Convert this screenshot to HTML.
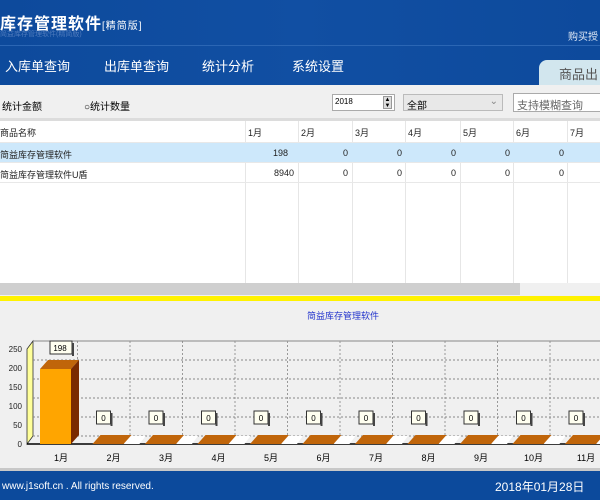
<!DOCTYPE html>
<html><head><meta charset="utf-8"><style>
*{margin:0;padding:0;box-sizing:border-box}
body{width:600px;height:500px;overflow:hidden;background:#f0f0f0;font-family:"Liberation Sans","Noto Sans CJK SC",sans-serif;position:relative}
.hd{position:absolute;left:0;top:0;width:600px;height:85px;background:linear-gradient(90deg,#0d4a9c,#114fa3 50%,#0d4a9c)}
.hd .t{position:absolute;left:0;top:10px;color:#fff;font-size:16px;font-weight:bold;letter-spacing:1px}
.hd .t small{font-size:10px;font-weight:normal}
.hd .s{position:absolute;left:0;top:29px;color:#4f7bbd;font-size:7px}
.hd .line{position:absolute;left:0;top:45px;width:600px;height:1px;background:#2b66b4}
.hd .buy{position:absolute;left:568px;top:28px;color:#dfe8f5;font-size:10px}
.nav{position:absolute;top:56px;color:#fff;font-size:13px}
.tab{position:absolute;left:539px;top:60px;width:70px;height:25px;background:#d2e6ee;border-radius:8px 8px 0 0;color:#555;font-size:13px;padding:4px 0 0 20px}
.tb{position:absolute;top:85px;left:0;width:600px;height:33px;background:#f0f0f0;font-size:10px}
.tbl{position:absolute;top:121px;left:0;width:600px;height:162px;background:#fff;font-size:9px;color:#222}
.row{position:absolute;left:0;width:600px;height:20px;border-bottom:1px solid #e8e8e8}
.c{position:absolute;top:5px}
.vl{position:absolute;top:0;width:1px;height:162px;background:#e6e6e6}
</style></head><body>
<div class="hd">
<div class="t">库存管理软件<small>[精简版]</small></div>
<div class="s">简益库存管理软件(精简版)</div>
<div class="line"></div>
<div class="buy">购买授</div>
</div>
<div class="nav" style="left:5px">入库单查询</div>
<div class="nav" style="left:104px">出库单查询</div>
<div class="nav" style="left:202px">统计分析</div>
<div class="nav" style="left:292px">系统设置</div>
<div class="tab">商品出</div>
<div class="tb">
<span style="position:absolute;left:2px;top:13px">统计金额</span>
<span style="position:absolute;left:84px;top:13px">○统计数量</span>
<div style="position:absolute;left:332px;top:9px;width:63px;height:17px;background:#fff;border:1px solid #aaa;font-size:8px;padding:2px">2018<span style="position:absolute;right:2px;top:1px;width:9px;height:13px;background:#ddd;border:1px solid #999;font-size:6px;line-height:6px;text-align:center">▲<br>▼</span></div>
<div style="position:absolute;left:403px;top:9px;width:100px;height:17px;background:#e8e8e8;border:1px solid #bbb;padding:2px 3px">全部<span style="position:absolute;right:4px;top:1px;color:#888">⌄</span></div>
<div style="position:absolute;left:513px;top:8px;width:90px;height:19px;background:#fff;border:1px solid #aaa;padding:3px;color:#666;font-size:11px">支持模糊查询</div>
</div>
<div style="position:absolute;top:118px;left:0;width:600px;height:3px;background:#dcdcdc"></div>
<div class="tbl">
<div class="vl" style="left:245px"></div><div class="vl" style="left:298px"></div><div class="vl" style="left:352px"></div><div class="vl" style="left:405px"></div><div class="vl" style="left:460px"></div><div class="vl" style="left:513px"></div><div class="vl" style="left:567px"></div>
<div class="row" style="top:0;height:22px"><span class="c">商品名称</span><span class="c" style="left:248px">1月</span><span class="c" style="left:301px">2月</span><span class="c" style="left:355px">3月</span><span class="c" style="left:408px">4月</span><span class="c" style="left:463px">5月</span><span class="c" style="left:516px">6月</span><span class="c" style="left:570px">7月</span></div>
<div class="row" style="top:22px;background:#cde8fb"><span class="c">简益库存管理软件</span><span class="c" style="left:273px">198</span><span class="c" style="left:343px">0</span><span class="c" style="left:397px">0</span><span class="c" style="left:451px">0</span><span class="c" style="left:505px">0</span><span class="c" style="left:559px">0</span></div>
<div class="row" style="top:42px"><span class="c">简益库存管理软件U盾</span><span class="c" style="left:274px">8940</span><span class="c" style="left:343px">0</span><span class="c" style="left:397px">0</span><span class="c" style="left:451px">0</span><span class="c" style="left:505px">0</span><span class="c" style="left:559px">0</span></div>
</div>
<div style="position:absolute;top:283px;left:0;width:520px;height:12px;background:#cfcfcf"></div>
<div style="position:absolute;top:296px;left:0;width:600px;height:5px;background:#fff200"></div>
<svg id="ch" width="600" height="170" style="position:absolute;left:0;top:301px" font-family="Liberation Sans,Noto Sans CJK SC,sans-serif"></svg>
<div style="position:absolute;top:468px;left:0;width:600px;height:3px;background:#c8c8c8"></div>
<div style="position:absolute;top:471px;left:0;width:600px;height:29px;background:#0c4a9c;color:#fff;font-size:10px">
<span style="position:absolute;left:2px;top:10px">www.j1soft.cn . All rights reserved.</span>
<span style="position:absolute;left:495px;top:7px;font-size:12px">2018年01月28日</span></div>
<script>
var s='',B=143;
s+='<text x="343" y="18" font-size="9" fill="#2233cc" text-anchor="middle">简益库存管理软件</text>';
s+='<polygon points="27,48 33,40 33,135 27,143" fill="#ffff99" stroke="#333" stroke-width="0.8"/>';
s+='<line x1="33" y1="40" x2="600" y2="40" stroke="#888"/>';
for(var i=0;i<11;i++){var vx=33+ (i+1)*52.5-8;s+='<line x1="'+vx+'" y1="40" x2="'+vx+'" y2="'+(B-8)+'" stroke="#999" stroke-dasharray="2,2"/>';}
for(var v=0;v<=250;v+=50){var y=B-v*0.38;s+='<text x="22" y="'+(y+3)+'" font-size="8" text-anchor="end" fill="#222">'+v+'</text>';s+='<line x1="33" y1="'+(y-8)+'" x2="600" y2="'+(y-8)+'" stroke="#888" stroke-dasharray="2,2"/>';}
s+='<line x1="27" y1="'+B+'" x2="600" y2="'+B+'" stroke="#000" stroke-width="1.5"/>';
for(var i=0;i<11;i++){var x=40+i*52.5,h=i?0:75;
if(i){s+='<polygon points="'+(x+47)+','+B+' '+(x+53)+','+(B-8)+' '+(x+38)+','+(B-8)+' '+(x+31)+','+B+'" fill="#fff"/>';}
s+='<rect x="'+x+'" y="'+(B-h)+'" width="31" height="'+h+'" fill="#ffa500"/>';
s+='<polygon points="'+x+','+(B-h)+' '+(x+8)+','+(B-h-9)+' '+(x+39)+','+(B-h-9)+' '+(x+31)+','+(B-h)+'" fill="#c0650a"/>';
if(i==0)s+='<polygon points="'+(x+31)+','+(B-h)+' '+(x+39)+','+(B-h-9)+' '+(x+39)+','+(B-9)+' '+(x+31)+','+B+'" fill="#7a2a00"/>';
var ly=i?110:40,lx=x+(i?12:18);
s+='<rect x="'+(lx-8)+'" y="'+ly+'" width="'+(i?14:22)+'" height="13" fill="#fffff0" stroke="#333" stroke-width="1"/><rect x="'+(lx+(i?6:14))+'" y="'+(ly+2)+'" width="2" height="13" fill="#444"/>';
s+='<text x="'+(lx-1+(i?0:3))+'" y="'+(ly+10)+'" font-size="8" text-anchor="middle">'+(i?0:198)+'</text>';
s+='<text x="'+(x+21)+'" y="'+(B+17)+'" font-size="9" text-anchor="middle">'+(i+1)+'月</text>';}
document.getElementById('ch').innerHTML=s;
</script>
</body></html>
